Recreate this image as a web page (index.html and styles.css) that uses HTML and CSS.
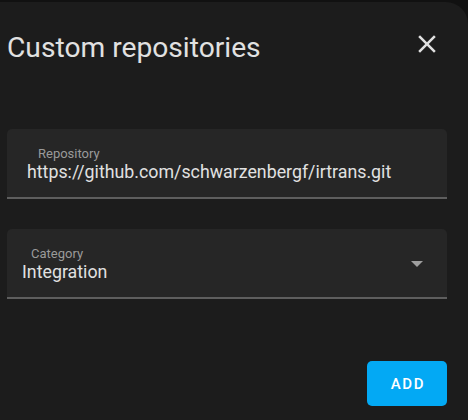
FILE: index.html
```html
<!DOCTYPE html>
<html lang="en">
<head>
<meta charset="utf-8">
<title>Custom repositories</title>
<link rel="stylesheet" href="styles.css">
</head>
<body>
<div class="dialog">
  <div class="header">
    <h2 class="title">Custom repositories</h2>
    <button class="close" aria-label="Close">
      <svg viewBox="0 0 24 24" width="30" height="30"><path fill="currentColor" d="M19,6.41L17.59,5L12,10.59L6.41,5L5,6.41L10.59,12L5,17.59L6.41,19L12,13.41L17.59,19L19,17.59L13.41,12L19,6.41Z"/></svg>
    </button>
  </div>
  <div class="field field-repo">
    <span class="label">Repository</span>
    <span class="value">https://github.com/schwarzenbergf/irtrans.git</span>
  </div>
  <div class="field field-cat">
    <span class="label">Category</span>
    <span class="value">Integration</span>
    <span class="arrow"></span>
  </div>
  <div class="actions">
    <button class="add">ADD</button>
  </div>
</div>
</body>
</html>
```
FILE: styles.css
```css
html, body {
  margin: 0;
  padding: 0;
  background: #111111;
  height: 100%;
}
body {
  padding-top: 2px;
  box-sizing: border-box;
  font-family: Roboto, "Liberation Sans", sans-serif;
  overflow: hidden;
}
.dialog {
  background: #1c1c1c;
  border-top-right-radius: 22px;
  height: 100%;
  padding: 28px 21px 0 7px;
  box-sizing: border-box;
}
.header {
  display: flex;
  justify-content: space-between;
  align-items: flex-start;
}
.title {
  margin: 0;
  font-size: 28.2px;
  line-height: 36px;
  font-weight: 400;
  color: #e1e1e1;
}
.close {
  background: none;
  border: 0;
  padding: 0;
  margin: -1px 5px 0 0;
  width: 30px;
  height: 30px;
  color: #e1e1e1;
  display: block;
}
.close svg { display: block; }
.field {
  position: relative;
  margin-top: 63px;
  height: 68px;
  background: #262626;
  border-radius: 5px 5px 0 0;
  border-bottom: 2px solid #5e5e5e;
  display: flex;
  flex-direction: column;
}
.field-cat { margin-top: 30px; }
.label {
  font-size: 13px;
  line-height: 16px;
  color: #9a9a9a;
  margin-top: 17px;
}
.value {
  font-size: 17.8px;
  line-height: 20px;
  color: #e1e1e1;
}
.field-repo .label { padding-left: 31px; }
.field-repo .value { padding-left: 20px; }
.field-cat .label { padding-left: 24px; }
.field-cat .value { padding-left: 15px; }
.arrow {
  position: absolute;
  right: 24px;
  top: 32px;
  width: 0;
  height: 0;
  border-left: 6px solid transparent;
  border-right: 6px solid transparent;
  border-top: 6px solid #9e9e9e;
}
.actions {
  display: flex;
  justify-content: flex-end;
  margin-top: 62px;
}
.add {
  width: 80px;
  height: 45px;
  border: 0;
  border-radius: 5px;
  background: #03a9f4;
  color: #ffffff;
  font-family: Roboto, "Liberation Sans", sans-serif;
  font-size: 15px;
  font-weight: 500;
  letter-spacing: 1.6px;
  padding: 0 0 0 2px;
}
```
